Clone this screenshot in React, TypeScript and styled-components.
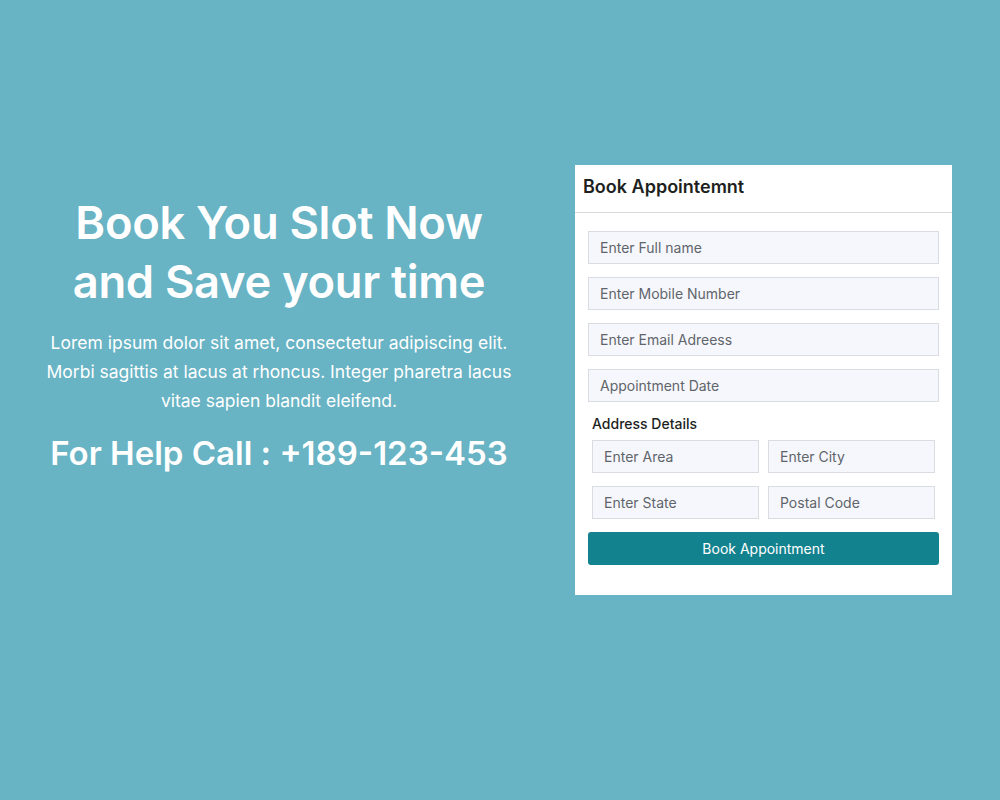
import React from 'react';
import styled, { createGlobalStyle } from 'styled-components';

const GlobalStyle = createGlobalStyle`
  html, body {
    margin: 0;
    padding: 0;
    background: #68b3c4;
    font-family: 'Inter', 'Noto Sans', sans-serif;
  }
`;

const Page = styled.main`
  width: 1000px;
  height: 800px;
  box-sizing: border-box;
  display: flex;
  align-items: flex-start;
  padding: 165px 48px 0 38px;
  gap: 55px;
  background: #68b3c4;
`;

const Intro = styled.section`
  width: 482px;
  margin-top: 28px;
  text-align: center;
  color: #ffffff;
`;

const Headline = styled.h1`
  margin: 0;
  font-size: 45.3px;
  line-height: 59px;
  font-weight: 600;
  letter-spacing: -0.3px;
`;

const Blurb = styled.p`
  margin: 17px 0 0;
  font-size: 17.5px;
  line-height: 29px;
  font-weight: 400;
`;

const HelpLine = styled.h2`
  margin: 16px 0 0;
  font-size: 33px;
  line-height: 44px;
  font-weight: 600;
`;

const Card = styled.form`
  width: 377px;
  height: 430px;
  box-sizing: border-box;
  background: #ffffff;
  display: flex;
  flex-direction: column;
`;

const CardHeader = styled.div`
  height: 48px;
  box-sizing: border-box;
  padding: 0 8px 5px;
  display: flex;
  align-items: center;
  border-bottom: 1px solid #d6d9dc;
  font-size: 18px;
  font-weight: 600;
  color: #1d1f21;
`;

const CardBody = styled.div`
  padding: 18px 13px 0;
  display: flex;
  flex-direction: column;
  gap: 13px;
`;

const Field = styled.input`
  width: 100%;
  height: 33px;
  box-sizing: border-box;
  padding: 0 11px;
  background: #f6f7fc;
  border: 1px solid #d9dce1;
  border-radius: 0;
  font-family: 'Inter', 'Noto Sans', sans-serif;
  font-size: 14px;
  color: #212529;
  outline: none;

  &::placeholder {
    color: #5f656b;
  }
`;

const Group = styled.div`
  padding: 0 4px;
  display: flex;
  flex-direction: column;
  gap: 6px;
`;

const GroupLabel = styled.div`
  font-size: 14px;
  line-height: 20px;
  font-weight: 500;
  color: #1d1f21;
  margin-top: -1px;
`;

const Pair = styled.div`
  display: grid;
  grid-template-columns: 1fr 1fr;
  column-gap: 9px;
  row-gap: 13px;
`;

const Submit = styled.button`
  height: 33px;
  border: none;
  border-radius: 3px;
  background: #13828f;
  color: #ffffff;
  font-family: 'Inter', 'Noto Sans', sans-serif;
  font-size: 14px;
  cursor: pointer;
`;

const App: React.FC = () => {
  return (
    <>
      <GlobalStyle />
      <Page>
        <Intro>
          <Headline>
            Book You Slot Now
            <br />
            and Save your time
          </Headline>
          <Blurb>
            Lorem ipsum dolor sit amet, consectetur adipiscing elit. Morbi sagittis at lacus at
            rhoncus. Integer pharetra lacus vitae sapien blandit eleifend.
          </Blurb>
          <HelpLine>For Help Call : +189-123-453</HelpLine>
        </Intro>

        <Card onSubmit={(e) => e.preventDefault()}>
          <CardHeader>Book Appointemnt</CardHeader>
          <CardBody>
            <Field placeholder="Enter Full name" />
            <Field placeholder="Enter Mobile Number" />
            <Field placeholder="Enter Email Adreess" />
            <Field placeholder="Appointment Date" />
            <Group>
              <GroupLabel>Address Details</GroupLabel>
              <Pair>
                <Field placeholder="Enter Area" />
                <Field placeholder="Enter City" />
                <Field placeholder="Enter State" />
                <Field placeholder="Postal Code" />
              </Pair>
            </Group>
            <Submit type="submit">Book Appointment</Submit>
          </CardBody>
        </Card>
      </Page>
    </>
  );
};

export default App;
